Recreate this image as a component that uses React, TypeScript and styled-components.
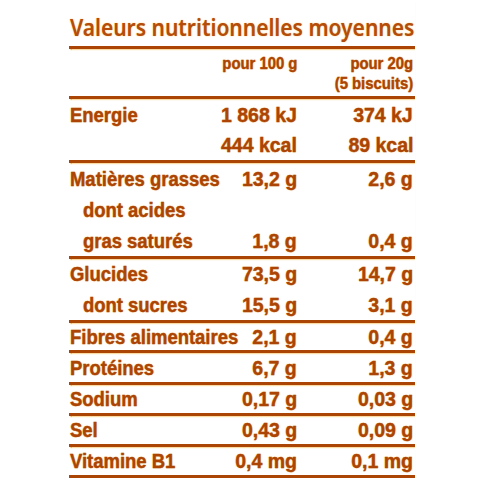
import styled, { createGlobalStyle } from "styled-components";

const GlobalStyle = createGlobalStyle`
  html, body {
    margin: 0;
    padding: 0;
    background: #ffffff;
  }
`;

type Line = { label: string; per100: string; perPortion: string; indent?: boolean };
type Group = { rows: Line[]; height: number; rowHeight: number; padTop?: number };

const groups: Group[] = [
  {
    height: 61,
    rowHeight: 30,
    padTop: 1,
    rows: [
      { label: "Energie", per100: "1 868 kJ", perPortion: "374 kJ" },
      { label: "", per100: "444 kcal", perPortion: "89 kcal" },
    ],
  },
  {
    height: 93,
    rowHeight: 31,
    rows: [
      { label: "Matières grasses", per100: "13,2 g", perPortion: "2,6 g" },
      { label: "dont acides", per100: "", perPortion: "", indent: true },
      { label: "gras saturés", per100: "1,8 g", perPortion: "0,4 g", indent: true },
    ],
  },
  {
    height: 61,
    rowHeight: 30.5,
    rows: [
      { label: "Glucides", per100: "73,5 g", perPortion: "14,7 g" },
      { label: "dont sucres", per100: "15,5 g", perPortion: "3,1 g", indent: true },
    ],
  },
  { height: 27, rowHeight: 27, rows: [{ label: "Fibres alimentaires", per100: "2,1 g", perPortion: "0,4 g" }] },
  { height: 29, rowHeight: 29, rows: [{ label: "Protéines", per100: "6,7 g", perPortion: "1,3 g" }] },
  { height: 28, rowHeight: 28, rows: [{ label: "Sodium", per100: "0,17 g", perPortion: "0,03 g" }] },
  { height: 28, rowHeight: 28, rows: [{ label: "Sel", per100: "0,43 g", perPortion: "0,09 g" }] },
  { height: 28, rowHeight: 28, rows: [{ label: "Vitamine B1", per100: "0,4 mg", perPortion: "0,1 mg" }] },
];

export default function App() {
  return (
    <>
      <GlobalStyle />
      <Label>
        <Section $height={46}>
          <Title>
            <TitleText>Valeurs nutritionnelles moyennes</TitleText>
          </Title>
        </Section>
        <Section $height={47}>
          <HeaderRow>
            <span />
            <HeadCell>
              <Narrow $align="right" $scale={0.9}>pour 100 g</Narrow>
            </HeadCell>
            <HeadCell>
              <Narrow $align="right" $scale={0.9}>
                pour 20g
                <br />
                (5 biscuits)
              </Narrow>
            </HeadCell>
          </HeaderRow>
        </Section>
        {groups.map((g, i) => (
          <Section key={i} $height={g.height} $padTop={g.padTop}>
            {g.rows.map((r, j) => (
              <Row key={j} $height={g.rowHeight}>
                <Name $indent={r.indent}>
                  <Narrow $align="left" $scale={0.9}>{r.label}</Narrow>
                </Name>
                <Value>
                  <Narrow $align="right" $scale={0.95}>{r.per100}</Narrow>
                </Value>
                <Value $last>
                  <Narrow $align="right" $scale={0.95}>{r.perPortion}</Narrow>
                </Value>
              </Row>
            ))}
          </Section>
        ))}
      </Label>
    </>
  );
}

const Label = styled.div`
  width: 346px;
  margin-left: 69px;
  font-family: "Liberation Sans", Arial, sans-serif;
  font-weight: bold;
  color: #ab4405;
  -webkit-text-stroke: 0.35px #ab4405;
  text-shadow: 0 0 1.5px rgba(246, 170, 40, 0.8);
`;

const Section = styled.div<{ $height: number; $padTop?: number }>`
  box-sizing: content-box;
  height: ${(p) => p.$height - (p.$padTop || 0)}px;
  padding-top: ${(p) => p.$padTop || 0}px;
  border-bottom: 3px solid #ab4505;
  box-shadow: 0 1.5px 1px -0.5px rgba(246, 170, 40, 0.85);
  display: flex;
  flex-direction: column;
`;

const Title = styled.div`
  font-family: "Noto Sans", "Liberation Sans", sans-serif;
  font-weight: 600;
  font-size: 24px;
  line-height: 28px;
  margin-top: 13px;
  white-space: nowrap;
  color: #b44c0b;
  -webkit-text-stroke: 0;
`;

const TitleText = styled.span`
  display: inline-block;
  transform: scaleX(0.875);
  transform-origin: left center;
  padding-left: 1px;
`;

const Narrow = styled.span<{ $align: "left" | "right"; $scale: number }>`
  display: inline-block;
  transform: scaleX(${(p) => p.$scale});
  transform-origin: ${(p) => p.$align} center;
`;

const HeaderRow = styled.div`
  display: grid;
  grid-template-columns: 1fr 98px 118px;
  padding-top: 4px;
`;

const HeadCell = styled.div`
  text-align: right;
  font-size: 16.5px;
  line-height: 20px;
  white-space: nowrap;

  &:last-child {
    padding-right: 2px;
  }
`;

const Row = styled.div<{ $height: number }>`
  display: grid;
  grid-template-columns: 130px 98px 118px;
  height: ${(p) => p.$height}px;
  line-height: ${(p) => p.$height}px;
  font-size: 20.5px;
  white-space: nowrap;
`;

const Name = styled.div<{ $indent?: boolean }>`
  padding-left: ${(p) => (p.$indent ? 14 : 1)}px;
`;

const Value = styled.div<{ $last?: boolean }>`
  text-align: right;
  padding-right: ${(p) => (p.$last ? 2 : 0)}px;
`;
